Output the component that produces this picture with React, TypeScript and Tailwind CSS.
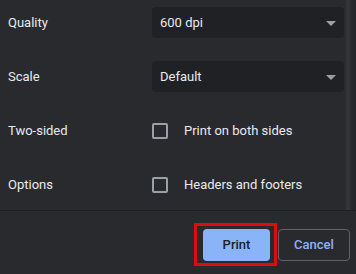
import React from 'react';

const Select: React.FC<{ value: string }> = ({ value }) => (
  <div className="w-[192px] h-[31px] bg-[#202124] rounded-[4px] flex items-center justify-between pl-2 pr-2">
    <span>{value}</span>
    <svg width="10" height="5" viewBox="0 0 10 5" className="mt-[1px]">
      <path d="M0 0 L10 0 L5 5 Z" fill="#9aa0a6" />
    </svg>
  </div>
);

const Checkbox: React.FC<{ label: string }> = ({ label }) => (
  <div className="flex items-center gap-4">
    <div className="w-4 h-4 border-2 border-[#9aa0a6] rounded-[2px]" />
    <span>{label}</span>
  </div>
);

const Row: React.FC<{ label: string; children: React.ReactNode }> = ({ label, children }) => (
  <div className="h-[31px] flex items-center">
    <div className="w-[152px] pl-2">{label}</div>
    {children}
  </div>
);

const App: React.FC = () => {
  return (
    <div
      className="w-[356px] h-[274px] bg-[#292a2d] text-[#e8eaed] text-[13px] flex flex-col overflow-hidden"
      style={{ fontFamily: 'Roboto, "Liberation Sans", sans-serif' }}
    >
      {/* Settings */}
      <div className="h-[210px] flex">
        <div className="flex-1 flex flex-col gap-[23px] pt-[7px]">
          <Row label="Quality">
            <Select value="600 dpi" />
          </Row>
          <Row label="Scale">
            <Select value="Default" />
          </Row>
          <Row label="Two-sided">
            <Checkbox label="Print on both sides" />
          </Row>
          <Row label="Options">
            <Checkbox label="Headers and footers" />
          </Row>
        </div>
        <div className="w-[11px] bg-[linear-gradient(to_right,#2c2d30,#37383b_30%,#28292c_60%,#242528)]" />
      </div>

      <div className="h-px bg-[#1f2023]" />

      {/* Footer */}
      <div className="flex-1 flex justify-end items-start pt-[12px] pr-[6px] gap-px">
        <div className="border-[3px] border-[#e00b0b] pt-[3px] pb-[2px] pl-[6px] pr-[4px]">
          <button className="w-[67px] h-[32px] rounded-[4px] bg-[#8ab4f8] text-[#202124] font-medium">
            Print
          </button>
        </div>
        <button className="mt-[6px] w-[72px] h-[32px] rounded-[4px] border border-[#5f6368] text-[#8ab4f8] font-medium">
          Cancel
        </button>
      </div>
    </div>
  );
};

export default App;
